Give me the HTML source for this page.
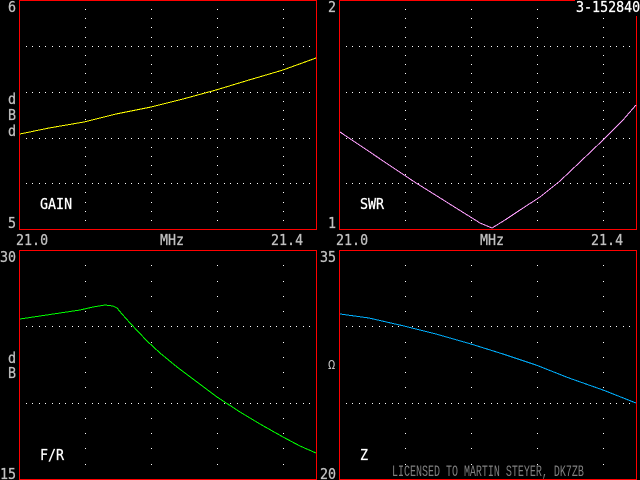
<!DOCTYPE html>
<html><head><meta charset="utf-8"><style>
html,body{margin:0;padding:0;background:#000;width:640px;height:480px;overflow:hidden}
svg{display:block;position:absolute;left:0;top:0}
text{font-family:"DejaVu Sans Mono","Liberation Mono",monospace;font-size:13.33px;fill:#c0c0c0;stroke:#c0c0c0;stroke-width:.25}
.w{fill:#fff;stroke:#fff}
.l{font-family:"Liberation Mono","DejaVu Sans Mono",monospace;font-size:10px;fill:#808080;stroke:none}
.c{fill:none;stroke-width:1}
</style></head><body>
<svg width="640" height="480" viewBox="0 0 640 480" shape-rendering="crispEdges">
<defs>
<path id="h" stroke="#fff" fill="none" d="M26 .5h1M32 .5h1M39 .5h1M45 .5h1M52 .5h1M59 .5h1M65 .5h1M72 .5h1M78 .5h1M85 .5h1M92 .5h1M98 .5h1M105 .5h1M111 .5h1M118 .5h1M125 .5h1M131 .5h1M138 .5h1M144 .5h1M151 .5h1M158 .5h1M164 .5h1M171 .5h1M177 .5h1M184 .5h1M191 .5h1M197 .5h1M204 .5h1M210 .5h1M217 .5h1M224 .5h1M230 .5h1M237 .5h1M243 .5h1M250 .5h1M257 .5h1M263 .5h1M270 .5h1M276 .5h1M283 .5h1M290 .5h1M296 .5h1M303 .5h1M309 .5h1"/>
<path id="vt" stroke="#fff" fill="none" d="M.5 9v1M.5 18v1M.5 27v1M.5 37v1M.5 55v1M.5 64v1M.5 73v1M.5 82v1M.5 101v1M.5 110v1M.5 119v1M.5 129v1M.5 147v1M.5 156v1M.5 165v1M.5 174v1M.5 192v1M.5 202v1M.5 211v1M.5 220v1M.5 46v1M.5 92v1M.5 138v1M.5 183v1"/>
<path id="vb" stroke="#fff" fill="none" d="M.5 265v1M.5 281v1M.5 296v1M.5 311v1M.5 326v1M.5 342v1M.5 357v1M.5 372v1M.5 387v1M.5 403v1M.5 418v1M.5 433v1M.5 448v1M.5 464v1"/>
<g id="gt">
<use href="#h" y="46"/><use href="#h" y="92"/><use href="#h" y="138"/><use href="#h" y="183"/>
<use href="#vt" x="85"/><use href="#vt" x="151"/><use href="#vt" x="217"/><use href="#vt" x="283"/>
</g>
<g id="gb">
<use href="#h" y="326"/><use href="#h" y="403"/>
<use href="#vb" x="85"/><use href="#vb" x="151"/><use href="#vb" x="217"/><use href="#vb" x="283"/>
</g>
</defs>

<use href="#gt"/><use href="#gt" x="320"/>
<use href="#gb"/><use href="#gb" x="320"/>

<g fill="none" stroke="#f00">
<rect x="19.5" y="0.5" width="297" height="229"/>
<rect x="339.5" y="0.5" width="297" height="229"/>
<rect x="19.5" y="250.5" width="297" height="229"/>
<rect x="339.5" y="250.5" width="297" height="229"/>
</g>

<polyline class="c" stroke="#ffff00" points="20,134 49,128 84,122 116,114 151,107 183,99 216,90 249,80 283,70 316,58"/>
<polyline class="c" stroke="#ffa0ff" points="340,132 413,181 480,223 492,228 505,220 520,210 540,197 560,181 580,162 603,140 623,120 636,105"/>
<polyline class="c" stroke="#00ff00" points="20,319 80,310 93,307 105,305 113,306 117,308 122,314 130,323 147,341 160,353 177,367 193,379 217,397 240,412 260,424 283,437 300,446 316,453"/>
<polyline class="c" stroke="#00b0ff" points="340,314 369,318 404,326 436,334 471,344 503,354 536,365 569,378 603,390 636,403"/>

<rect x="575" y="0" width="65" height="16" fill="#000"/>

<g shape-rendering="auto">
<text transform="translate(8,12) scale(1,1.13)">6</text>
<text transform="translate(8,104) scale(1,1.13)">d</text>
<text transform="translate(8,120) scale(1,1.13)">B</text>
<text transform="translate(8,136) scale(1,1.13)">d</text>
<text transform="translate(8,228) scale(1,1.13)">5</text>
<text transform="translate(16,245) scale(1,1.13)">21.0</text>
<text transform="translate(160,245) scale(1,1.13)">MHz</text>
<text transform="translate(271,245) scale(1,1.13)">21.4</text>
<text transform="translate(0,262) scale(1,1.13)">30</text>
<text transform="translate(8,363) scale(1,1.13)">d</text>
<text transform="translate(8,378) scale(1,1.13)">B</text>
<text transform="translate(0,479) scale(1,1.13)">15</text>
<text class="w" transform="translate(40,209) scale(1,1.13)">GAIN</text>
<text class="w" transform="translate(40,460) scale(1,1.13)">F/R</text>

<text transform="translate(328,12) scale(1,1.13)">2</text>
<text transform="translate(328,228) scale(1,1.13)">1</text>
<text transform="translate(336,245) scale(1,1.13)">21.0</text>
<text transform="translate(480,245) scale(1,1.13)">MHz</text>
<text transform="translate(591,245) scale(1,1.13)">21.4</text>
<text transform="translate(320,262) scale(1,1.13)">35</text>
<text transform="translate(328,369)" style="font-size:12px;stroke:none">Ω</text>
<text transform="translate(320,479) scale(1,1.13)">20</text>
<text class="w" transform="translate(360,209) scale(1,1.13)">SWR</text>
<text class="w" transform="translate(360,460) scale(1,1.13)">Z</text>
<text class="w" transform="translate(576,12) scale(1,1.13)">3-152840</text>
<text class="l" transform="translate(392,476) scale(1,1.6)">LICENSED TO MARTIN STEYER, DK7ZB</text>
</g>
</svg>
</body></html>
